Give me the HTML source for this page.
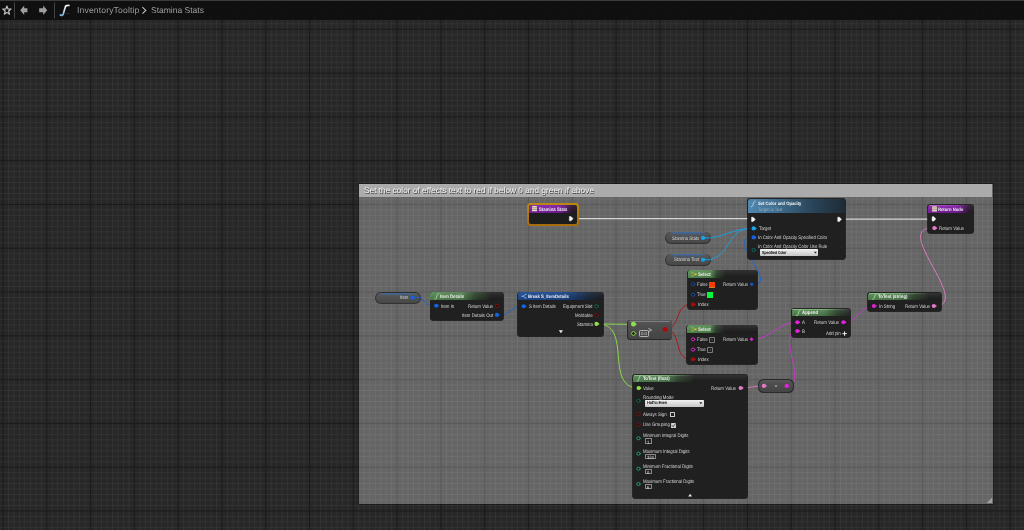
<!DOCTYPE html><html><head><meta charset="utf-8"><style>
html,body{margin:0;padding:0;width:1024px;height:530px;overflow:hidden;background:#272727}
.t{position:absolute;white-space:nowrap;font-family:"Liberation Sans", sans-serif;will-change:transform;text-rendering:geometricPrecision}
</style></head><body>
<svg width="1024" height="530" style="position:absolute;left:0;top:0"><rect width="1024" height="530" fill="#272727"/><path d="M-2.47 0V530M8.47 0V530M13.95 0V530M19.42 0V530M24.89 0V530M30.37 0V530M35.84 0V530M41.32 0V530M52.26 0V530M57.74 0V530M63.21 0V530M68.69 0V530M74.16 0V530M79.63 0V530M85.11 0V530M96.05 0V530M101.53 0V530M107.00 0V530M112.47 0V530M117.95 0V530M123.42 0V530M128.90 0V530M139.84 0V530M145.32 0V530M150.79 0V530M156.26 0V530M161.74 0V530M167.21 0V530M172.69 0V530M183.63 0V530M189.11 0V530M194.58 0V530M200.06 0V530M205.53 0V530M211.00 0V530M216.48 0V530M227.42 0V530M232.90 0V530M238.37 0V530M243.84 0V530M249.32 0V530M254.79 0V530M260.27 0V530M271.21 0V530M276.69 0V530M282.16 0V530M287.63 0V530M293.11 0V530M298.58 0V530M304.06 0V530M315.00 0V530M320.48 0V530M325.95 0V530M331.43 0V530M336.90 0V530M342.37 0V530M347.85 0V530M358.79 0V530M364.27 0V530M369.74 0V530M375.21 0V530M380.69 0V530M386.16 0V530M391.64 0V530M402.58 0V530M408.06 0V530M413.53 0V530M419.00 0V530M424.48 0V530M429.95 0V530M435.43 0V530M446.37 0V530M451.85 0V530M457.32 0V530M462.80 0V530M468.27 0V530M473.74 0V530M479.22 0V530M490.16 0V530M495.64 0V530M501.11 0V530M506.58 0V530M512.06 0V530M517.53 0V530M523.01 0V530M533.95 0V530M539.43 0V530M544.90 0V530M550.38 0V530M555.85 0V530M561.32 0V530M566.80 0V530M577.74 0V530M583.22 0V530M588.69 0V530M594.16 0V530M599.64 0V530M605.11 0V530M610.59 0V530M621.53 0V530M627.01 0V530M632.48 0V530M637.96 0V530M643.43 0V530M648.90 0V530M654.38 0V530M665.32 0V530M670.80 0V530M676.27 0V530M681.75 0V530M687.22 0V530M692.69 0V530M698.17 0V530M709.11 0V530M714.59 0V530M720.06 0V530M725.53 0V530M731.01 0V530M736.48 0V530M741.96 0V530M752.90 0V530M758.38 0V530M763.85 0V530M769.32 0V530M774.80 0V530M780.27 0V530M785.75 0V530M796.69 0V530M802.17 0V530M807.64 0V530M813.12 0V530M818.59 0V530M824.06 0V530M829.54 0V530M840.48 0V530M845.96 0V530M851.43 0V530M856.90 0V530M862.38 0V530M867.85 0V530M873.33 0V530M884.27 0V530M889.75 0V530M895.22 0V530M900.69 0V530M906.17 0V530M911.64 0V530M917.12 0V530M928.06 0V530M933.54 0V530M939.01 0V530M944.49 0V530M949.96 0V530M955.43 0V530M960.91 0V530M971.85 0V530M977.33 0V530M982.80 0V530M988.27 0V530M993.75 0V530M999.22 0V530M1004.70 0V530M1015.64 0V530M1021.12 0V530M0 -3.54H1024M0 1.93H1024M0 7.41H1024M0 12.88H1024M0 18.35H1024M0 23.83H1024M0 34.77H1024M0 40.25H1024M0 45.72H1024M0 51.20H1024M0 56.67H1024M0 62.14H1024M0 67.62H1024M0 78.56H1024M0 84.04H1024M0 89.51H1024M0 94.98H1024M0 100.46H1024M0 105.93H1024M0 111.41H1024M0 122.35H1024M0 127.83H1024M0 133.30H1024M0 138.78H1024M0 144.25H1024M0 149.72H1024M0 155.20H1024M0 166.14H1024M0 171.62H1024M0 177.09H1024M0 182.56H1024M0 188.04H1024M0 193.51H1024M0 198.99H1024M0 209.93H1024M0 215.41H1024M0 220.88H1024M0 226.36H1024M0 231.83H1024M0 237.30H1024M0 242.78H1024M0 253.72H1024M0 259.20H1024M0 264.67H1024M0 270.14H1024M0 275.62H1024M0 281.09H1024M0 286.57H1024M0 297.51H1024M0 302.99H1024M0 308.46H1024M0 313.94H1024M0 319.41H1024M0 324.88H1024M0 330.36H1024M0 341.30H1024M0 346.78H1024M0 352.25H1024M0 357.73H1024M0 363.20H1024M0 368.67H1024M0 374.15H1024M0 385.09H1024M0 390.57H1024M0 396.04H1024M0 401.51H1024M0 406.99H1024M0 412.46H1024M0 417.94H1024M0 428.88H1024M0 434.36H1024M0 439.83H1024M0 445.31H1024M0 450.78H1024M0 456.25H1024M0 461.73H1024M0 472.67H1024M0 478.15H1024M0 483.62H1024M0 489.10H1024M0 494.57H1024M0 500.04H1024M0 505.52H1024M0 516.46H1024M0 521.94H1024M0 527.41H1024" stroke="#343434" stroke-width="0.9" fill="none"/><path d="M3.00 0V530M46.79 0V530M90.58 0V530M134.37 0V530M178.16 0V530M221.95 0V530M265.74 0V530M309.53 0V530M353.32 0V530M397.11 0V530M440.90 0V530M484.69 0V530M528.48 0V530M572.27 0V530M616.06 0V530M659.85 0V530M703.64 0V530M747.43 0V530M791.22 0V530M835.01 0V530M878.80 0V530M922.59 0V530M966.38 0V530M1010.17 0V530M0 29.30H1024M0 73.09H1024M0 116.88H1024M0 160.67H1024M0 204.46H1024M0 248.25H1024M0 292.04H1024M0 335.83H1024M0 379.62H1024M0 423.41H1024M0 467.20H1024M0 510.99H1024" stroke="#1b1b1b" stroke-width="1.0" fill="none"/></svg>
<div style="position:absolute;left:0.00px;top:0.00px;width:1024.00px;height:1.20px;background:#3c3c3c"></div>
<div style="position:absolute;left:0.00px;top:1.20px;width:1024.00px;height:18.80px;background:rgba(14,14,14,0.93)"></div>
<svg width="1024" height="21" style="position:absolute;left:0;top:0"><path d="M6.9 6.0L8.0 9.0L11.1 9.1L8.6 11.0L9.5 14.2L6.9 12.4L4.3 14.2L5.2 11.0L2.7 9.1L5.8 9.0Z" fill="none" stroke="#c4c4c4" stroke-width="1.15" stroke-linejoin="round"/><rect x="14.1" y="2.5" width="0.9" height="16" fill="#4a4a4a"/><rect x="54.0" y="2.5" width="0.9" height="16" fill="#4a4a4a"/><path d="M20.2 10.2L24.2 5.4V8.2H27.4V12.2H24.2V15L20.2 10.2Z" fill="#9e9e9e"/><path d="M47.2 10.2L43.2 5.4V8.2H39.2V12.2H43.2V15L47.2 10.2Z" fill="#9e9e9e"/><defs><linearGradient id="fg" x1="0" y1="0" x2="0" y2="1"><stop offset="0" stop-color="#f4f0fa"/><stop offset="0.5" stop-color="#c8dcec"/><stop offset="1" stop-color="#7ab8e8"/></linearGradient></defs><path d="M60.4 15.0Q62.7 16.3 63.4 13.6L65.2 7.2Q65.7 5.2 69.0 5.5" fill="none" stroke="url(#fg)" stroke-width="1.7" stroke-linecap="round" stroke-linejoin="round"/><rect x="66.3" y="13.3" width="3" height="0.5" fill="#555"/></svg>
<div class="t" style="left:76.70px;top:6.15px;font-size:8.6px;line-height:8.6px;color:#9c9c9c;letter-spacing:0.14px">InventoryTooltip</div>
<svg width="1024" height="21" style="position:absolute;left:0;top:0"><path d="M142.4 7.2L145.8 10.4L142.4 13.6" fill="none" stroke="#c0c0c0" stroke-width="1.1"/></svg>
<div class="t" style="left:151.00px;top:6.20px;font-size:8.5px;line-height:8.5px;color:#a0a0a0;">Stamina Stats</div>
<div style="position:absolute;left:358.8px;top:184px;width:633.9px;height:319.5px;overflow:hidden;box-shadow:0 0 0 0.7px rgba(0,0,0,0.45)"><div style="position:absolute;left:-358.8px;top:-184px"><svg width="1024" height="530" style="position:absolute;left:0;top:0"><rect width="1024" height="530" fill="#656565"/><path d="M-2.47 0V530M8.47 0V530M13.95 0V530M19.42 0V530M24.89 0V530M30.37 0V530M35.84 0V530M41.32 0V530M52.26 0V530M57.74 0V530M63.21 0V530M68.69 0V530M74.16 0V530M79.63 0V530M85.11 0V530M96.05 0V530M101.53 0V530M107.00 0V530M112.47 0V530M117.95 0V530M123.42 0V530M128.90 0V530M139.84 0V530M145.32 0V530M150.79 0V530M156.26 0V530M161.74 0V530M167.21 0V530M172.69 0V530M183.63 0V530M189.11 0V530M194.58 0V530M200.06 0V530M205.53 0V530M211.00 0V530M216.48 0V530M227.42 0V530M232.90 0V530M238.37 0V530M243.84 0V530M249.32 0V530M254.79 0V530M260.27 0V530M271.21 0V530M276.69 0V530M282.16 0V530M287.63 0V530M293.11 0V530M298.58 0V530M304.06 0V530M315.00 0V530M320.48 0V530M325.95 0V530M331.43 0V530M336.90 0V530M342.37 0V530M347.85 0V530M358.79 0V530M364.27 0V530M369.74 0V530M375.21 0V530M380.69 0V530M386.16 0V530M391.64 0V530M402.58 0V530M408.06 0V530M413.53 0V530M419.00 0V530M424.48 0V530M429.95 0V530M435.43 0V530M446.37 0V530M451.85 0V530M457.32 0V530M462.80 0V530M468.27 0V530M473.74 0V530M479.22 0V530M490.16 0V530M495.64 0V530M501.11 0V530M506.58 0V530M512.06 0V530M517.53 0V530M523.01 0V530M533.95 0V530M539.43 0V530M544.90 0V530M550.38 0V530M555.85 0V530M561.32 0V530M566.80 0V530M577.74 0V530M583.22 0V530M588.69 0V530M594.16 0V530M599.64 0V530M605.11 0V530M610.59 0V530M621.53 0V530M627.01 0V530M632.48 0V530M637.96 0V530M643.43 0V530M648.90 0V530M654.38 0V530M665.32 0V530M670.80 0V530M676.27 0V530M681.75 0V530M687.22 0V530M692.69 0V530M698.17 0V530M709.11 0V530M714.59 0V530M720.06 0V530M725.53 0V530M731.01 0V530M736.48 0V530M741.96 0V530M752.90 0V530M758.38 0V530M763.85 0V530M769.32 0V530M774.80 0V530M780.27 0V530M785.75 0V530M796.69 0V530M802.17 0V530M807.64 0V530M813.12 0V530M818.59 0V530M824.06 0V530M829.54 0V530M840.48 0V530M845.96 0V530M851.43 0V530M856.90 0V530M862.38 0V530M867.85 0V530M873.33 0V530M884.27 0V530M889.75 0V530M895.22 0V530M900.69 0V530M906.17 0V530M911.64 0V530M917.12 0V530M928.06 0V530M933.54 0V530M939.01 0V530M944.49 0V530M949.96 0V530M955.43 0V530M960.91 0V530M971.85 0V530M977.33 0V530M982.80 0V530M988.27 0V530M993.75 0V530M999.22 0V530M1004.70 0V530M1015.64 0V530M1021.12 0V530M0 -3.54H1024M0 1.93H1024M0 7.41H1024M0 12.88H1024M0 18.35H1024M0 23.83H1024M0 34.77H1024M0 40.25H1024M0 45.72H1024M0 51.20H1024M0 56.67H1024M0 62.14H1024M0 67.62H1024M0 78.56H1024M0 84.04H1024M0 89.51H1024M0 94.98H1024M0 100.46H1024M0 105.93H1024M0 111.41H1024M0 122.35H1024M0 127.83H1024M0 133.30H1024M0 138.78H1024M0 144.25H1024M0 149.72H1024M0 155.20H1024M0 166.14H1024M0 171.62H1024M0 177.09H1024M0 182.56H1024M0 188.04H1024M0 193.51H1024M0 198.99H1024M0 209.93H1024M0 215.41H1024M0 220.88H1024M0 226.36H1024M0 231.83H1024M0 237.30H1024M0 242.78H1024M0 253.72H1024M0 259.20H1024M0 264.67H1024M0 270.14H1024M0 275.62H1024M0 281.09H1024M0 286.57H1024M0 297.51H1024M0 302.99H1024M0 308.46H1024M0 313.94H1024M0 319.41H1024M0 324.88H1024M0 330.36H1024M0 341.30H1024M0 346.78H1024M0 352.25H1024M0 357.73H1024M0 363.20H1024M0 368.67H1024M0 374.15H1024M0 385.09H1024M0 390.57H1024M0 396.04H1024M0 401.51H1024M0 406.99H1024M0 412.46H1024M0 417.94H1024M0 428.88H1024M0 434.36H1024M0 439.83H1024M0 445.31H1024M0 450.78H1024M0 456.25H1024M0 461.73H1024M0 472.67H1024M0 478.15H1024M0 483.62H1024M0 489.10H1024M0 494.57H1024M0 500.04H1024M0 505.52H1024M0 516.46H1024M0 521.94H1024M0 527.41H1024" stroke="#707070" stroke-width="0.9" fill="none"/><path d="M3.00 0V530M46.79 0V530M90.58 0V530M134.37 0V530M178.16 0V530M221.95 0V530M265.74 0V530M309.53 0V530M353.32 0V530M397.11 0V530M440.90 0V530M484.69 0V530M528.48 0V530M572.27 0V530M616.06 0V530M659.85 0V530M703.64 0V530M747.43 0V530M791.22 0V530M835.01 0V530M878.80 0V530M922.59 0V530M966.38 0V530M1010.17 0V530M0 29.30H1024M0 73.09H1024M0 116.88H1024M0 160.67H1024M0 204.46H1024M0 248.25H1024M0 292.04H1024M0 335.83H1024M0 379.62H1024M0 423.41H1024M0 467.20H1024M0 510.99H1024" stroke="#5a5a5a" stroke-width="1.0" fill="none"/></svg></div></div>
<div style="position:absolute;left:359.20px;top:183.80px;width:633.00px;height:12.80px;background:#ababab"></div>
<div class="t" style="left:363.70px;top:185.75px;font-size:8.3px;line-height:8.3px;color:#f4f4f4;text-shadow:0.6px 0.6px 0.4px #333">Set the color of effects text to red if below 0 and green if above</div>
<svg width="1024" height="530" style="position:absolute;left:0;top:0"><path d="M992.2 497.5V503H986.7Z" fill="#a0a0a0"/></svg>
<svg width="1024" height="530" style="position:absolute;left:0;top:0"><path d="M578.8 218.6H751" stroke="#d6d6d6" stroke-width="1.25" fill="none"/><path d="M845.3 219.1H932" stroke="#d6d6d6" stroke-width="1.25" fill="none"/><path d="M705.40 237.90C723.93 237.90 732.97 228.40 751.50 228.40" stroke="#1aa3e8" stroke-width="0.9" fill="none"/><path d="M705.40 259.70C731.20 259.70 725.70 228.40 751.50 228.40" stroke="#1aa3e8" stroke-width="0.9" fill="none"/><path d="M415.00 297.50C424.20 297.50 425.10 305.80 434.30 305.80" stroke="#1762e0" stroke-width="0.9" fill="none"/><path d="M500.00 315.00C510.03 315.00 511.37 306.30 521.40 306.30" stroke="#1762e0" stroke-width="0.9" fill="none"/><path d="M753.60 284.30C778.45 284.30 726.65 237.40 751.50 237.40" stroke="#1762e0" stroke-width="0.9" fill="none"/><path d="M751.60 339.30C772.50 339.30 776.40 322.30 797.30 322.30" stroke="#cc38cc" stroke-width="0.9" fill="none"/><path d="M741.00 388.00C749.40 388.00 755.70 385.90 764.10 385.90" stroke="#e57ac8" stroke-width="0.9" fill="none"/><path d="M786.90 385.90C808.67 385.90 775.53 331.00 797.30 331.00" stroke="#cc38cc" stroke-width="0.9" fill="none"/><path d="M843.60 322.30C859.20 322.30 858.50 306.00 874.10 306.00" stroke="#cc38cc" stroke-width="0.9" fill="none"/><path d="M934.00 306.00C974.28 306.00 891.72 228.10 932.00 228.10" stroke="#e57ac8" stroke-width="0.9" fill="none"/><path d="M664.40 329.40C681.60 329.40 673.80 304.40 691.00 304.40" stroke="#b01010" stroke-width="0.9" fill="none"/><path d="M664.40 329.40C683.23 329.40 672.17 359.30 691.00 359.30" stroke="#b01010" stroke-width="0.9" fill="none"/><path d="M598.00 323.90C609.73 323.90 620.97 324.40 632.70 324.40" stroke="#8ee04a" stroke-width="0.9" fill="none"/><path d="M598.00 323.90C632.93 323.90 603.67 388.10 638.60 388.10" stroke="#8ee04a" stroke-width="0.9" fill="none"/></svg>
<div style="position:absolute;left:527.10px;top:203.10px;width:51.90px;height:22.70px;border-radius:3.5px;background:linear-gradient(#bb8716,#a66a0e)"></div>
<div style="position:absolute;left:529.20px;top:205.00px;width:47.70px;height:18.70px;border-radius:2px;background:#1c1d1c"></div>
<div style="position:absolute;left:529.20px;top:205.00px;width:47.70px;height:7.90px;border-radius:2px 2px 0 0;background:linear-gradient(rgba(255,255,255,0.05), rgba(0,0,0,0.15)), linear-gradient(90deg, #8a22b0 0%, #7e1ea4 65%, rgba(70,20,80,0.5) 88%, rgba(40,30,40,0.2) 100%)"></div>
<div class="t" style="left:538.90px;top:208.00px;font-size:4.3px;line-height:4.3px;color:#f0f0f0;font-weight:bold;transform:scaleY(1.15);">Stamina Stats</div>
<div style="position:absolute;left:746.70px;top:198.40px;width:99.50px;height:61.90px;border-radius:3.4px;background:rgba(8,8,8,0.7)"></div>
<div style="position:absolute;left:747.50px;top:199.20px;width:97.90px;height:60.10px;border-radius:2.5px;background:rgba(31,32,31,0.96)"></div>
<div style="position:absolute;left:747.50px;top:199.20px;width:97.90px;height:13.90px;border-radius:2.5px 2.5px 0 0;background:linear-gradient(90deg, #5288ad 0%, #3f6d8e 30%, #2a465a 65%, #1f2b35 100%)"></div>
<div style="position:absolute;left:748.30px;top:199.50px;width:96.30px;height:0.80px;background:linear-gradient(90deg, rgba(180,220,250,0.5), rgba(180,220,250,0) 80%)"></div>
<div class="t" style="left:757.80px;top:202.27px;font-size:4.16px;line-height:4.16px;color:#f4f4f4;font-weight:bold;transform:scaleY(1.15);">Set Color and Opacity</div>
<div class="t" style="left:757.80px;top:208.17px;font-size:4.16px;line-height:4.16px;color:#98acbc;transform:scaleY(1.15);">Target is Text</div>
<div class="t" style="left:758.50px;top:227.17px;font-size:4.35px;line-height:4.35px;color:#d6d6d6;transform:scaleY(1.15);">Target</div>
<div class="t" style="left:758.10px;top:236.21px;font-size:4.28px;line-height:4.28px;color:#d6d6d6;transform:scaleY(1.15);">In Color And Opacity Specified Color</div>
<div class="t" style="left:758.10px;top:245.01px;font-size:4.28px;line-height:4.28px;color:#d6d6d6;transform:scaleY(1.15);">In Color And Opacity Color Use Rule</div>
<div style="position:absolute;left:760.20px;top:249.30px;width:58.10px;height:6.50px;background:linear-gradient(#f2f2f2,#c6c6c6);border-radius:0.8px"></div>
<div class="t" style="left:762.00px;top:251.75px;font-size:3.6px;line-height:3.6px;color:#222;transform:scaleY(1.2);text-shadow:0.1px 0 0 #222">Specified Color</div>
<div style="position:absolute;left:927.40px;top:203.70px;width:47.10px;height:30.50px;border-radius:3.4px;background:rgba(8,8,8,0.7)"></div>
<div style="position:absolute;left:928.20px;top:204.50px;width:45.50px;height:28.70px;border-radius:2.5px;background:rgba(31,32,31,0.96)"></div>
<div style="position:absolute;left:928.20px;top:204.50px;width:45.50px;height:8.30px;border-radius:2.5px 2.5px 0 0;background:linear-gradient(rgba(255,255,255,0.05), rgba(0,0,0,0.15)), linear-gradient(90deg, #8a22b0 0%, #7e1ea4 65%, rgba(70,20,80,0.5) 88%, rgba(40,30,40,0.2) 100%)"></div>
<div style="position:absolute;left:929.00px;top:204.80px;width:43.90px;height:0.80px;background:linear-gradient(90deg, rgba(220,150,240,0.5), rgba(220,150,240,0) 90%)"></div>
<div class="t" style="left:938.10px;top:207.54px;font-size:4.22px;line-height:4.22px;color:#f0f0f0;font-weight:bold;transform:scaleY(1.15);">Return Node</div>
<div class="t" style="left:938.90px;top:226.87px;font-size:4.35px;line-height:4.35px;color:#d6d6d6;transform:scaleY(1.15);">Return Value</div>
<div style="position:absolute;left:665.10px;top:231.60px;width:46.00px;height:12.80px;border-radius:6.5px;background:rgba(14,14,14,0.6)"></div>
<div style="position:absolute;left:665.90px;top:232.20px;width:44.40px;height:11.10px;border-radius:6px;background:linear-gradient(#626262 0%, #555 18%, #4e4e4e 60%, #474747 100%)"></div>
<div style="position:absolute;left:668.40px;top:232.40px;width:38.40px;height:4.40px;border-radius:4px 4px 2px 2px;background:linear-gradient(rgba(30,120,230,0.55), rgba(30,120,230,0.12) 45%, rgba(30,120,230,0) 100%);-webkit-mask-image:linear-gradient(90deg, transparent, #000 20%, #000 80%, transparent)"></div>
<div class="t" style="left:671.70px;top:236.66px;font-size:4.38px;line-height:4.38px;color:#d8d8d8;transform:scaleY(1.15);">Stamina Stats</div>
<div style="position:absolute;left:665.10px;top:253.60px;width:46.00px;height:12.70px;border-radius:6.5px;background:rgba(14,14,14,0.6)"></div>
<div style="position:absolute;left:665.90px;top:254.20px;width:44.40px;height:11.00px;border-radius:6px;background:linear-gradient(#626262 0%, #555 18%, #4e4e4e 60%, #474747 100%)"></div>
<div style="position:absolute;left:668.40px;top:254.40px;width:38.40px;height:4.40px;border-radius:4px 4px 2px 2px;background:linear-gradient(rgba(30,120,230,0.55), rgba(30,120,230,0.12) 45%, rgba(30,120,230,0) 100%);-webkit-mask-image:linear-gradient(90deg, transparent, #000 20%, #000 80%, transparent)"></div>
<div class="t" style="left:673.70px;top:258.46px;font-size:4.38px;line-height:4.38px;color:#d8d8d8;transform:scaleY(1.15);">Stamina Text</div>
<div style="position:absolute;left:375.10px;top:291.90px;width:45.70px;height:12.20px;border-radius:6.5px;background:rgba(14,14,14,0.6)"></div>
<div style="position:absolute;left:375.90px;top:292.50px;width:44.10px;height:10.50px;border-radius:6px;background:linear-gradient(#626262 0%, #555 18%, #4e4e4e 60%, #474747 100%)"></div>
<div style="position:absolute;left:378.40px;top:292.70px;width:38.10px;height:4.40px;border-radius:4px 4px 2px 2px;background:linear-gradient(rgba(30,120,230,0.55), rgba(30,120,230,0.12) 45%, rgba(30,120,230,0) 100%);-webkit-mask-image:linear-gradient(90deg, transparent, #000 20%, #000 80%, transparent)"></div>
<div class="t" style="left:400.00px;top:296.36px;font-size:4.38px;line-height:4.38px;color:#d8d8d8;transform:scaleY(1.15);">Item</div>
<div style="position:absolute;left:429.50px;top:291.60px;width:74.50px;height:29.10px;border-radius:3.4px;background:rgba(8,8,8,0.7)"></div>
<div style="position:absolute;left:430.30px;top:292.40px;width:72.90px;height:27.30px;border-radius:2.5px;background:rgba(31,32,31,0.96)"></div>
<div style="position:absolute;left:430.30px;top:292.40px;width:72.90px;height:7.50px;border-radius:2.5px 2.5px 0 0;background:linear-gradient(rgba(255,255,255,0.08), rgba(0,0,0,0.12)), linear-gradient(90deg, rgb(86,136,84) 0px, rgb(80,128,78) 32px, rgba(60,95,60,0.6) 45px, rgba(40,48,40,0.0) 62px)"></div>
<div style="position:absolute;left:431.10px;top:292.70px;width:71.30px;height:0.80px;background:linear-gradient(90deg, rgba(170,230,160,0.55) 0px, rgba(170,230,160,0.35) 35px, rgba(170,230,160,0) 60px)"></div>
<div class="t" style="left:440.40px;top:295.11px;font-size:4.29px;line-height:4.29px;color:#eeeeee;font-weight:bold;transform:scaleY(1.15);">Item Details</div>
<div class="t" style="left:440.80px;top:304.57px;font-size:4.35px;line-height:4.35px;color:#d6d6d6;transform:scaleY(1.15);">Item In</div>
<div class="t" style="right:530.90px;top:304.57px;font-size:4.35px;line-height:4.35px;color:#d6d6d6;transform:scaleY(1.15);">Return Value</div>
<div class="t" style="right:530.90px;top:313.67px;font-size:4.35px;line-height:4.35px;color:#d6d6d6;transform:scaleY(1.15);">Item Details Out</div>
<div style="position:absolute;left:517.00px;top:291.50px;width:87.20px;height:45.30px;border-radius:3.4px;background:rgba(8,8,8,0.7)"></div>
<div style="position:absolute;left:517.80px;top:292.30px;width:85.60px;height:43.50px;border-radius:2.5px;background:rgba(31,32,31,0.96)"></div>
<div style="position:absolute;left:517.80px;top:292.30px;width:85.60px;height:7.70px;border-radius:2.5px 2.5px 0 0;background:linear-gradient(rgba(255,255,255,0.05), rgba(0,0,0,0.15)), linear-gradient(90deg, #1f4c96 0%, #1c478c 55%, rgba(25,50,90,0.5) 85%, rgba(25,40,60,0.1) 100%)"></div>
<div style="position:absolute;left:518.60px;top:292.60px;width:84.00px;height:0.80px;background:linear-gradient(90deg, rgba(120,170,240,0.6), rgba(120,170,240,0) 85%)"></div>
<div class="t" style="left:528.20px;top:295.02px;font-size:4.25px;line-height:4.25px;color:#f0f0f0;font-weight:bold;transform:scaleY(1.15);">Break S_ItemDetails</div>
<div class="t" style="left:528.70px;top:305.07px;font-size:4.35px;line-height:4.35px;color:#d6d6d6;transform:scaleY(1.15);">S Item Details</div>
<div class="t" style="right:431.50px;top:305.07px;font-size:4.35px;line-height:4.35px;color:#d6d6d6;transform:scaleY(1.15);">Equipment Slot</div>
<div class="t" style="right:431.50px;top:313.88px;font-size:4.35px;line-height:4.35px;color:#d6d6d6;transform:scaleY(1.15);">Moldable</div>
<div class="t" style="right:431.50px;top:322.67px;font-size:4.35px;line-height:4.35px;color:#d6d6d6;transform:scaleY(1.15);">Stamina</div>
<div style="position:absolute;left:686.70px;top:269.60px;width:71.00px;height:40.70px;border-radius:3.4px;background:rgba(8,8,8,0.7)"></div>
<div style="position:absolute;left:687.50px;top:270.40px;width:69.40px;height:38.90px;border-radius:2.5px;background:rgba(31,32,31,0.96)"></div>
<div style="position:absolute;left:687.50px;top:270.40px;width:69.40px;height:7.80px;border-radius:2.5px 2.5px 0 0;background:linear-gradient(rgba(255,255,255,0.08), rgba(0,0,0,0.12)), linear-gradient(90deg, rgb(90,146,86) 0px, rgb(82,136,78) 23px, rgba(60,95,60,0.5) 29px, rgba(40,48,40,0.0) 38px)"></div>
<div style="position:absolute;left:688.30px;top:270.70px;width:67.80px;height:0.80px;background:linear-gradient(90deg, rgba(170,230,160,0.55) 0px, rgba(170,230,160,0.35) 24px, rgba(170,230,160,0) 34px)"></div>
<div class="t" style="left:697.50px;top:273.17px;font-size:4.35px;line-height:4.35px;color:#f0f0f0;font-weight:bold;transform:scaleY(1.15);">Select</div>
<div class="t" style="left:697.00px;top:283.07px;font-size:4.35px;line-height:4.35px;color:#d6d6d6;transform:scaleY(1.15);">False</div>
<div style="position:absolute;left:709.00px;top:282.00px;width:6.10px;height:5.60px;background:linear-gradient(#ff3a05 80%, #d08020 80%)"></div>
<div class="t" style="left:697.00px;top:293.47px;font-size:4.35px;line-height:4.35px;color:#d6d6d6;transform:scaleY(1.15);">True</div>
<div style="position:absolute;left:707.20px;top:291.90px;width:6.00px;height:5.90px;background:#08f83c"></div>
<div class="t" style="left:697.90px;top:303.17px;font-size:4.35px;line-height:4.35px;color:#d6d6d6;transform:scaleY(1.15);">Index</div>
<div class="t" style="right:276.10px;top:283.07px;font-size:4.35px;line-height:4.35px;color:#d6d6d6;transform:scaleY(1.15);">Return Value</div>
<div style="position:absolute;left:627.00px;top:319.50px;width:45.30px;height:20.50px;border-radius:3.2px;background:rgba(15,15,15,0.7)"></div>
<div style="position:absolute;left:627.70px;top:320.10px;width:43.90px;height:19.10px;border-radius:2.6px;background:linear-gradient(#5a5a5a 0%, #505050 20%, #4a4a4a 60%, #444 100%)"></div>
<div style="position:absolute;left:629.50px;top:320.50px;width:40.30px;height:0.70px;background:rgba(200,200,200,0.35);border-radius:1px"></div>
<div style="position:absolute;left:639.30px;top:330.00px;width:9.60px;height:6.60px;border:0.75px solid #b0b0b0;border-radius:1.2px;box-sizing:border-box"></div>
<div class="t" style="left:641.00px;top:332.10px;font-size:4.3px;line-height:4.3px;color:#d8d8d8;transform:scaleY(1.1);">0.0</div>
<div style="position:absolute;left:686.40px;top:324.60px;width:71.90px;height:40.50px;border-radius:3.4px;background:rgba(8,8,8,0.7)"></div>
<div style="position:absolute;left:687.20px;top:325.40px;width:70.30px;height:38.70px;border-radius:2.5px;background:rgba(31,32,31,0.96)"></div>
<div style="position:absolute;left:687.20px;top:325.40px;width:70.30px;height:7.60px;border-radius:2.5px 2.5px 0 0;background:linear-gradient(rgba(255,255,255,0.08), rgba(0,0,0,0.12)), linear-gradient(90deg, rgb(90,146,86) 0px, rgb(82,136,78) 23px, rgba(60,95,60,0.5) 29px, rgba(40,48,40,0.0) 38px)"></div>
<div style="position:absolute;left:688.00px;top:325.70px;width:68.70px;height:0.80px;background:linear-gradient(90deg, rgba(170,230,160,0.55) 0px, rgba(170,230,160,0.35) 24px, rgba(170,230,160,0) 34px)"></div>
<div class="t" style="left:697.50px;top:327.97px;font-size:4.35px;line-height:4.35px;color:#f0f0f0;font-weight:bold;transform:scaleY(1.15);">Select</div>
<div class="t" style="left:697.00px;top:338.07px;font-size:4.35px;line-height:4.35px;color:#d6d6d6;transform:scaleY(1.15);">False</div>
<div style="position:absolute;left:709.00px;top:336.70px;width:5.90px;height:5.90px;border:0.75px solid #7a7a7a;border-radius:0.9px;box-sizing:border-box"></div>
<div class="t" style="left:697.00px;top:348.38px;font-size:4.35px;line-height:4.35px;color:#d6d6d6;transform:scaleY(1.15);">True</div>
<div style="position:absolute;left:707.40px;top:347.00px;width:6.10px;height:5.70px;border:0.75px solid #7a7a7a;border-radius:0.9px;box-sizing:border-box"></div>
<div class="t" style="left:697.90px;top:358.07px;font-size:4.35px;line-height:4.35px;color:#d6d6d6;transform:scaleY(1.15);">Index</div>
<div class="t" style="right:276.10px;top:338.07px;font-size:4.35px;line-height:4.35px;color:#d6d6d6;transform:scaleY(1.15);">Return Value</div>
<div style="position:absolute;left:631.90px;top:373.70px;width:116.20px;height:125.70px;border-radius:3.4px;background:rgba(8,8,8,0.7)"></div>
<div style="position:absolute;left:632.70px;top:374.50px;width:114.60px;height:123.90px;border-radius:2.5px;background:rgba(31,32,31,0.96)"></div>
<div style="position:absolute;left:632.70px;top:374.50px;width:114.60px;height:7.40px;border-radius:2.5px 2.5px 0 0;background:linear-gradient(rgba(255,255,255,0.08), rgba(0,0,0,0.12)), linear-gradient(90deg, rgb(86,136,84) 0px, rgb(80,128,78) 32px, rgba(60,95,60,0.6) 45px, rgba(40,48,40,0.0) 62px)"></div>
<div style="position:absolute;left:633.50px;top:374.80px;width:113.00px;height:0.80px;background:linear-gradient(90deg, rgba(170,230,160,0.55) 0px, rgba(170,230,160,0.35) 35px, rgba(170,230,160,0) 60px)"></div>
<div class="t" style="left:642.50px;top:377.00px;font-size:4.3px;line-height:4.3px;color:#f0f0f0;font-weight:bold;transform:scaleY(1.15);">ToText (float)</div>
<div class="t" style="left:643.00px;top:386.88px;font-size:4.35px;line-height:4.35px;color:#d6d6d6;transform:scaleY(1.15);">Value</div>
<div class="t" style="right:287.80px;top:386.77px;font-size:4.35px;line-height:4.35px;color:#d6d6d6;transform:scaleY(1.15);">Return Value</div>
<div class="t" style="left:643.00px;top:395.67px;font-size:4.35px;line-height:4.35px;color:#d6d6d6;transform:scaleY(1.15);">Rounding Mode</div>
<div style="position:absolute;left:645.40px;top:399.60px;width:58.20px;height:7.20px;background:linear-gradient(#f2f2f2,#c6c6c6);border-radius:0.8px"></div>
<div class="t" style="left:647.00px;top:402.32px;font-size:3.65px;line-height:3.65px;color:#222;transform:scaleY(1.2);text-shadow:0.1px 0 0 #222">Half to Even</div>
<div class="t" style="left:643.00px;top:412.88px;font-size:4.35px;line-height:4.35px;color:#d6d6d6;transform:scaleY(1.15);">Always Sign</div>
<div style="position:absolute;left:669.70px;top:411.90px;width:5.10px;height:5.10px;border:0.8px solid #ccc;border-radius:0.6px;box-sizing:border-box"></div>
<div class="t" style="left:643.00px;top:423.38px;font-size:4.35px;line-height:4.35px;color:#d6d6d6;transform:scaleY(1.15);">Use Grouping</div>
<div style="position:absolute;left:670.80px;top:422.60px;width:5.60px;height:5.30px;background:#d0d0d0;border-radius:0.6px"></div>
<div class="t" style="left:643.00px;top:434.27px;font-size:4.35px;line-height:4.35px;color:#d6d6d6;transform:scaleY(1.15);">Minimum Integral Digits</div>
<div style="position:absolute;left:645.00px;top:438.40px;width:6.70px;height:5.30px;border:0.6px solid #8a8a8a;border-radius:0.6px;box-sizing:border-box"></div>
<div class="t" style="left:646.90px;top:440.60px;font-size:4.1px;line-height:4.1px;color:#e0e0e0;transform:scaleY(1.15);">1</div>
<div class="t" style="left:643.00px;top:449.57px;font-size:4.35px;line-height:4.35px;color:#d6d6d6;transform:scaleY(1.15);">Maximum Integral Digits</div>
<div style="position:absolute;left:645.00px;top:453.70px;width:11.20px;height:5.30px;border:0.6px solid #8a8a8a;border-radius:0.6px;box-sizing:border-box"></div>
<div class="t" style="left:646.60px;top:455.90px;font-size:4.1px;line-height:4.1px;color:#e0e0e0;transform:scaleY(1.15);">324</div>
<div class="t" style="left:643.00px;top:464.67px;font-size:4.35px;line-height:4.35px;color:#d6d6d6;transform:scaleY(1.15);">Minimum Fractional Digits</div>
<div style="position:absolute;left:645.00px;top:468.50px;width:6.70px;height:5.30px;border:0.6px solid #8a8a8a;border-radius:0.6px;box-sizing:border-box"></div>
<div class="t" style="left:646.90px;top:470.70px;font-size:4.1px;line-height:4.1px;color:#e0e0e0;transform:scaleY(1.15);">0</div>
<div class="t" style="left:643.00px;top:479.97px;font-size:4.35px;line-height:4.35px;color:#d6d6d6;transform:scaleY(1.15);">Maximum Fractional Digits</div>
<div style="position:absolute;left:645.00px;top:483.90px;width:6.70px;height:5.30px;border:0.6px solid #8a8a8a;border-radius:0.6px;box-sizing:border-box"></div>
<div class="t" style="left:646.90px;top:486.10px;font-size:4.1px;line-height:4.1px;color:#e0e0e0;transform:scaleY(1.15);">6</div>
<div style="position:absolute;left:790.80px;top:308.10px;width:60.20px;height:30.40px;border-radius:3.4px;background:rgba(8,8,8,0.7)"></div>
<div style="position:absolute;left:791.60px;top:308.90px;width:58.60px;height:28.60px;border-radius:2.5px;background:rgba(31,32,31,0.96)"></div>
<div style="position:absolute;left:791.60px;top:308.90px;width:58.60px;height:7.60px;border-radius:2.5px 2.5px 0 0;background:linear-gradient(rgba(255,255,255,0.08), rgba(0,0,0,0.12)), linear-gradient(90deg, rgb(86,136,84) 0px, rgb(80,128,78) 32px, rgba(60,95,60,0.6) 45px, rgba(40,48,40,0.0) 62px)"></div>
<div style="position:absolute;left:792.40px;top:309.20px;width:57.00px;height:0.80px;background:linear-gradient(90deg, rgba(170,230,160,0.55) 0px, rgba(170,230,160,0.35) 35px, rgba(170,230,160,0) 60px)"></div>
<div class="t" style="left:802.00px;top:311.47px;font-size:4.35px;line-height:4.35px;color:#f0f0f0;font-weight:bold;transform:scaleY(1.15);">Append</div>
<div class="t" style="left:802.00px;top:321.07px;font-size:4.35px;line-height:4.35px;color:#d6d6d6;transform:scaleY(1.15);">A</div>
<div class="t" style="left:802.00px;top:329.77px;font-size:4.35px;line-height:4.35px;color:#d6d6d6;transform:scaleY(1.15);">B</div>
<div class="t" style="right:184.60px;top:321.07px;font-size:4.35px;line-height:4.35px;color:#d6d6d6;transform:scaleY(1.15);">Return Value</div>
<div class="t" style="right:183.00px;top:332.38px;font-size:4.35px;line-height:4.35px;color:#d6d6d6;transform:scaleY(1.15);">Add pin</div>
<div style="position:absolute;left:867.40px;top:291.80px;width:74.30px;height:20.70px;border-radius:3.4px;background:rgba(8,8,8,0.7)"></div>
<div style="position:absolute;left:868.20px;top:292.60px;width:72.70px;height:18.90px;border-radius:2.5px;background:rgba(31,32,31,0.96)"></div>
<div style="position:absolute;left:868.20px;top:292.60px;width:72.70px;height:7.15px;border-radius:2.5px 2.5px 0 0;background:linear-gradient(rgba(255,255,255,0.08), rgba(0,0,0,0.12)), linear-gradient(90deg, rgb(86,136,84) 0px, rgb(80,128,78) 32px, rgba(60,95,60,0.6) 45px, rgba(40,48,40,0.0) 62px)"></div>
<div style="position:absolute;left:869.00px;top:292.90px;width:71.10px;height:0.80px;background:linear-gradient(90deg, rgba(170,230,160,0.55) 0px, rgba(170,230,160,0.35) 35px, rgba(170,230,160,0) 60px)"></div>
<div class="t" style="left:878.00px;top:295.00px;font-size:4.3px;line-height:4.3px;color:#f0f0f0;font-weight:bold;transform:scaleY(1.15);">ToText (string)</div>
<div class="t" style="left:879.00px;top:304.77px;font-size:4.35px;line-height:4.35px;color:#d6d6d6;transform:scaleY(1.15);">In String</div>
<div class="t" style="right:94.00px;top:304.77px;font-size:4.35px;line-height:4.35px;color:#d6d6d6;transform:scaleY(1.15);">Return Value</div>
<div style="position:absolute;left:758.00px;top:379.40px;width:36.10px;height:13.80px;border-radius:5.5px;background:rgba(15,15,15,0.7)"></div>
<div style="position:absolute;left:758.70px;top:380.00px;width:34.70px;height:12.40px;border-radius:5px;background:linear-gradient(#5a5a5a 0%, #505050 20%, #4a4a4a 60%, #444 100%)"></div>
<svg width="1024" height="530" style="position:absolute;left:0;top:0"><rect x="532.00" y="206.10" width="5" height="5.2" fill="#e6dfb9" rx="0.4"/><path d="M532.00 207.70H537.00M532.00 209.40H537.00" stroke="#6a5a7a" stroke-width="0.5"/><path d="M569.35 216.55H571.01L573.05 218.70L571.01 220.85H569.35Z" fill="#f4f4f4" stroke="#f4f4f4" stroke-width="0.5" stroke-linejoin="round"/><path d="M751.20 206.80Q752.20 207.10 752.60 205.80L753.90 201.80Q754.20 201.00 755.30 201.10" fill="none" stroke="#a8d0ee" stroke-width="0.95" stroke-linecap="round"/><path d="M751.55 217.25H753.21L755.25 219.40L753.21 221.55H751.55Z" fill="#f4f4f4" stroke="#f4f4f4" stroke-width="0.5" stroke-linejoin="round"/><path d="M837.75 217.15H839.41L841.45 219.30L839.41 221.45H837.75Z" fill="#f4f4f4" stroke="#f4f4f4" stroke-width="0.5" stroke-linejoin="round"/><circle cx="753.60" cy="228.40" r="2.05" fill="#1aa3e8"/><path d="M755.05 227.10L756.75 228.40L755.05 229.70Z" fill="#1aa3e8"/><circle cx="753.60" cy="237.40" r="2.05" fill="#1762e0"/><path d="M755.05 236.10L756.75 237.40L755.05 238.70Z" fill="#1762e0"/><circle cx="753.60" cy="250.00" r="1.55" fill="#101010" stroke="#0c7060" stroke-width="1.0"/><path d="M755.45 249.20L756.55 250.00L755.45 250.80Z" fill="#0c7060"/><path d="M813.9 251.8H817L815.45 253.6Z" fill="#222"/><rect x="932.00" y="206.30" width="5" height="5.2" fill="#e6dfb9" rx="0.4"/><path d="M932.00 207.90H937.00M932.00 209.60H937.00" stroke="#6a5a7a" stroke-width="0.5"/><path d="M932.15 216.75H933.81L935.85 218.90L933.81 221.05H932.15Z" fill="#f4f4f4" stroke="#f4f4f4" stroke-width="0.5" stroke-linejoin="round"/><circle cx="934.30" cy="228.10" r="2.05" fill="#e57ac8"/><path d="M935.75 226.80L937.45 228.10L935.75 229.40Z" fill="#e57ac8"/><circle cx="703.00" cy="237.90" r="2.05" fill="#1aa3e8"/><path d="M704.45 236.60L706.15 237.90L704.45 239.20Z" fill="#1aa3e8"/><path d="M705.00 237.90H711.30" stroke="#1aa3e8" stroke-width="0.9"/><circle cx="703.00" cy="259.70" r="2.05" fill="#1aa3e8"/><path d="M704.45 258.40L706.15 259.70L704.45 261.00Z" fill="#1aa3e8"/><path d="M705.00 259.70H711.30" stroke="#1aa3e8" stroke-width="0.9"/><circle cx="412.40" cy="297.60" r="2.05" fill="#1762e0"/><path d="M413.85 296.30L415.55 297.60L413.85 298.90Z" fill="#1762e0"/><path d="M414.40 297.60H421.00" stroke="#1762e0" stroke-width="0.9"/><path d="M434.80 299.20Q435.80 299.50 436.20 298.20L437.50 294.20Q437.80 293.40 438.90 293.50" fill="none" stroke="#9ad896" stroke-width="0.95" stroke-linecap="round"/><circle cx="436.20" cy="305.80" r="2.05" fill="#1762e0"/><path d="M437.65 304.50L439.35 305.80L437.65 307.10Z" fill="#1762e0"/><circle cx="496.90" cy="305.80" r="1.55" fill="#101010" stroke="#900c0c" stroke-width="1.0"/><path d="M498.75 305.00L499.85 305.80L498.75 306.60Z" fill="#900c0c"/><circle cx="496.90" cy="314.90" r="2.05" fill="#1762e0"/><path d="M498.35 313.60L500.05 314.90L498.35 316.20Z" fill="#1762e0"/><path d="M521.2 296.2H523.6L525.2 294.4H526.4M523.6 296.2L525.2 298H526.4" fill="none" stroke="#cfe0f4" stroke-width="0.7"/><circle cx="523.60" cy="306.30" r="2.05" fill="#1762e0"/><path d="M525.05 305.00L526.75 306.30L525.05 307.60Z" fill="#1762e0"/><circle cx="596.40" cy="306.30" r="1.55" fill="#101010" stroke="#0c7060" stroke-width="1.0"/><path d="M598.25 305.50L599.35 306.30L598.25 307.10Z" fill="#0c7060"/><circle cx="596.40" cy="315.10" r="1.55" fill="#101010" stroke="#900c0c" stroke-width="1.0"/><path d="M598.25 314.30L599.35 315.10L598.25 315.90Z" fill="#900c0c"/><circle cx="596.40" cy="323.90" r="2.05" fill="#8ee04a"/><path d="M597.85 322.60L599.55 323.90L597.85 325.20Z" fill="#8ee04a"/><path d="M558.8 330.2H563L560.9 333.2Z" fill="#e8e8e8"/><path d="M691.20 272.80H693.40L694.40 274.30L693.40 275.80H691.20" fill="none" stroke="#d8b030" stroke-width="0.8"/><path d="M694.40 274.30H695.40" stroke="#e0c020" stroke-width="0.8"/><circle cx="695.80" cy="274.30" r="0.9" fill="#f0d020"/><circle cx="693.00" cy="284.30" r="1.55" fill="#101010" stroke="#1a50b0" stroke-width="1.0"/><path d="M694.85 283.50L695.95 284.30L694.85 285.10Z" fill="#1a50b0"/><circle cx="693.00" cy="294.70" r="1.55" fill="#101010" stroke="#1a50b0" stroke-width="1.0"/><path d="M694.85 293.90L695.95 294.70L694.85 295.50Z" fill="#1a50b0"/><circle cx="693.00" cy="304.40" r="2.05" fill="#a80c0c"/><path d="M694.45 303.10L696.15 304.40L694.45 305.70Z" fill="#a80c0c"/><path d="M749.90 284.30L751.70 282.50L753.50 284.30L751.70 286.10Z" fill="#1a58d0" stroke="#1a58d0" stroke-width="0.4" stroke-linejoin="round"/><circle cx="633.40" cy="324.20" r="2.4" fill="#8ee04a"/><path d="M635.20 322.90L636.90 324.20L635.20 325.50Z" fill="#8ee04a"/><circle cx="633.40" cy="333.50" r="1.80" fill="#101010" stroke="#8ee04a" stroke-width="1.0"/><path d="M635.50 332.70L636.60 333.50L635.50 334.30Z" fill="#8ee04a"/><path d="M648.3 328.3L651.6 330.1L648.3 331.9" fill="none" stroke="#e8e8e8" stroke-width="0.65"/><circle cx="664.80" cy="329.50" r="2.4" fill="#a80c0c"/><path d="M666.60 328.20L668.30 329.50L666.60 330.80Z" fill="#a80c0c"/><path d="M691.20 327.80H693.40L694.40 329.30L693.40 330.80H691.20" fill="none" stroke="#d8b030" stroke-width="0.8"/><path d="M694.40 329.30H695.40" stroke="#e0c020" stroke-width="0.8"/><circle cx="695.80" cy="329.30" r="0.9" fill="#f0d020"/><circle cx="693.00" cy="339.30" r="1.55" fill="#101010" stroke="#e321d8" stroke-width="1.0"/><path d="M694.85 338.50L695.95 339.30L694.85 340.10Z" fill="#e321d8"/><circle cx="712.0" cy="339.8" r="0.45" fill="#bbb"/><circle cx="693.00" cy="349.60" r="1.55" fill="#101010" stroke="#e321d8" stroke-width="1.0"/><path d="M694.85 348.80L695.95 349.60L694.85 350.40Z" fill="#e321d8"/><circle cx="710.4" cy="350.0" r="0.45" fill="#bbb"/><circle cx="693.00" cy="359.30" r="2.05" fill="#a80c0c"/><path d="M694.45 358.00L696.15 359.30L694.45 360.60Z" fill="#a80c0c"/><path d="M749.80 339.30L751.60 337.50L753.40 339.30L751.60 341.10Z" fill="#e321d8" stroke="#e321d8" stroke-width="0.4" stroke-linejoin="round"/><path d="M637.00 381.30Q638.00 381.60 638.40 380.30L639.70 376.30Q640.00 375.50 641.10 375.60" fill="none" stroke="#9ad896" stroke-width="0.95" stroke-linecap="round"/><circle cx="638.60" cy="388.10" r="2.05" fill="#8ee04a"/><path d="M640.05 386.80L641.75 388.10L640.05 389.40Z" fill="#8ee04a"/><circle cx="740.60" cy="388.00" r="2.05" fill="#e57ac8"/><path d="M742.05 386.70L743.75 388.00L742.05 389.30Z" fill="#e57ac8"/><circle cx="638.40" cy="400.80" r="1.55" fill="#101010" stroke="#0c7060" stroke-width="1.0"/><path d="M640.25 400.00L641.35 400.80L640.25 401.60Z" fill="#0c7060"/><path d="M699.3 402.3H702.3L700.8 404.3Z" fill="#222"/><circle cx="638.40" cy="414.10" r="1.55" fill="#101010" stroke="#8c0c0c" stroke-width="1.0"/><path d="M640.25 413.30L641.35 414.10L640.25 414.90Z" fill="#8c0c0c"/><circle cx="638.40" cy="424.60" r="1.55" fill="#101010" stroke="#8c0c0c" stroke-width="1.0"/><path d="M640.25 423.80L641.35 424.60L640.25 425.40Z" fill="#8c0c0c"/><path d="M671.8 425.2L673.2 426.8L675.5 423.6" fill="none" stroke="#222" stroke-width="0.7"/><circle cx="638.40" cy="438.30" r="1.55" fill="#101010" stroke="#1aa888" stroke-width="1.0"/><path d="M640.25 437.50L641.35 438.30L640.25 439.10Z" fill="#1aa888"/><circle cx="638.40" cy="453.60" r="1.55" fill="#101010" stroke="#1aa888" stroke-width="1.0"/><path d="M640.25 452.80L641.35 453.60L640.25 454.40Z" fill="#1aa888"/><circle cx="638.40" cy="468.70" r="1.55" fill="#101010" stroke="#1aa888" stroke-width="1.0"/><path d="M640.25 467.90L641.35 468.70L640.25 469.50Z" fill="#1aa888"/><circle cx="638.40" cy="484.00" r="1.55" fill="#101010" stroke="#1aa888" stroke-width="1.0"/><path d="M640.25 483.20L641.35 484.00L640.25 484.80Z" fill="#1aa888"/><path d="M688.2 496.6H692L690.1 493.8Z" fill="#e8e8e8"/><path d="M796.40 315.70Q797.40 316.00 797.80 314.70L799.10 310.70Q799.40 309.90 800.50 310.00" fill="none" stroke="#9ad896" stroke-width="0.95" stroke-linecap="round"/><circle cx="797.30" cy="322.30" r="2.05" fill="#e321d8"/><path d="M798.75 321.00L800.45 322.30L798.75 323.60Z" fill="#e321d8"/><circle cx="797.30" cy="331.00" r="2.05" fill="#e321d8"/><path d="M798.75 329.70L800.45 331.00L798.75 332.30Z" fill="#e321d8"/><circle cx="843.40" cy="322.30" r="2.05" fill="#e321d8"/><path d="M844.85 321.00L846.55 322.30L844.85 323.60Z" fill="#e321d8"/><path d="M844.6 331.4V335.8M842.4 333.6H846.8" stroke="#f0f0f0" stroke-width="1.0"/><path d="M872.60 299.40Q873.60 299.70 874.00 298.40L875.30 294.40Q875.60 293.60 876.70 293.70" fill="none" stroke="#9ad896" stroke-width="0.95" stroke-linecap="round"/><circle cx="873.90" cy="306.00" r="2.05" fill="#e321d8"/><path d="M875.35 304.70L877.05 306.00L875.35 307.30Z" fill="#e321d8"/><circle cx="933.80" cy="306.00" r="2.05" fill="#e57ac8"/><path d="M935.25 304.70L936.95 306.00L935.25 307.30Z" fill="#e57ac8"/><circle cx="763.90" cy="385.90" r="2.05" fill="#e57ac8"/><path d="M765.35 384.60L767.05 385.90L765.35 387.20Z" fill="#e57ac8"/><circle cx="776" cy="386" r="0.8" fill="#ddd"/><circle cx="786.60" cy="385.90" r="2.05" fill="#e321d8"/><path d="M788.05 384.60L789.75 385.90L788.05 387.20Z" fill="#e321d8"/></svg>
</body></html>
